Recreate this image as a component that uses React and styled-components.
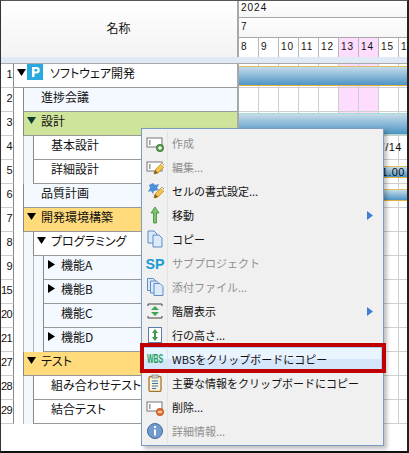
import React from "react";
import styled, { createGlobalStyle, css } from "styled-components";

const Global = createGlobalStyle`
  html, body { margin: 0; padding: 0; background: #fff; }
  body { width: 409px; height: 453px; overflow: hidden; font-family: "Noto Sans CJK JP", "Liberation Sans", sans-serif; color: #111; }
`;

const Frame = styled.div`
  position: relative;
  width: 409px;
  height: 453px;
  box-sizing: border-box;
  background: #fff;
  border-top: 1px solid #555;
  border-left: 1px solid #333;
  border-right: 2px solid #222;
  border-bottom: 2px solid #111;
  overflow: hidden;
  display: grid;
  grid-template-columns: 238px 1fr;
  grid-template-rows: 56px 7px 1fr;
`;

const NameHeader = styled.div`
  background: linear-gradient(#fff, #f3f3f3);
  border-right: 2px solid #a8a8a8;
  display: flex;
  align-items: center;
  justify-content: center;
  font-size: 12px;
  padding: 0 1px 4px 0;
  box-sizing: border-box;
`;

const TimeHeader = styled.div`
  display: grid;
  grid-template-rows: 17px 20px 19px;
  font-size: 10px;
  font-family: "Liberation Sans", sans-serif;
  overflow: hidden;
`;

const HeaderBand = styled.div`
  background: linear-gradient(#fff, #f6f6f6);
  border-bottom: 1px solid #a8a8a8;
  padding: 0 2px;
  letter-spacing: 1px;
  line-height: ${(p) => p.$line}px;
  box-sizing: border-box;
`;

const Days = styled.div`
  display: flex;
`;

const Day = styled.div`
  width: 20px;
  flex: none;
  box-sizing: border-box;
  border-right: 1px solid #b8b8b8;
  padding-left: 2px;
  line-height: 18px;
  letter-spacing: 1px;
  background: ${(p) => (p.$pink ? "#fddcfd" : "#fff")};
`;

const Stripe = styled.div`
  grid-column: 1 / 3;
  background: #e1e9f6;
  border-bottom: 1px solid #aaa;
`;

const Body = styled.div`
  grid-column: 1 / 3;
  display: flex;
  flex-direction: column;
`;

const Row = styled.div`
  display: grid;
  grid-template-columns: 238px 1fr;
  height: 24px;
  flex: none;
`;

const Left = styled.div`
  display: flex;
  height: 24px;
  box-sizing: border-box;
  border-right: 2px solid #a8a8a8;
  overflow: hidden;
`;

const Num = styled.div`
  width: 13px;
  flex: none;
  box-sizing: border-box;
  border-right: 1px solid #888;
  border-bottom: 1px solid #ccc;
  font-size: 11px;
  line-height: 20px;
  text-align: right;
  padding-right: 1px;
  letter-spacing: -0.6px;
  font-family: "Liberation Sans", sans-serif;
`;

const Guide = styled.div`
  width: ${(p) => (p.$first ? 9 : 10)}px;
  flex: none;
  box-sizing: border-box;
  background: ${(p) => (p.$tint ? "#f2f8fe" : "#fff")};
  border-left: ${(p) => (p.$first ? "0" : "1px solid #b5b5b5")};
`;

const rowKinds = {
  plain: css`background: #fff;`,
  tint: css`background: #f3f9ff;`,
  green: css`background: #cee49b;`,
  orange: css`background: #ffdb7c;`,
};

const Cell = styled.div`
  flex: 1;
  min-width: 0;
  display: flex;
  align-items: center;
  box-sizing: border-box;
  border-left: ${(p) => (p.$noLine ? "0" : "1px solid #888")};
  border-bottom: 1px solid #999;
  font-size: 12px;
  font-feature-settings: "palt";
  white-space: nowrap;
  padding-bottom: 7px;
  padding-left: ${(p) => p.$pad}px;
  ${(p) => rowKinds[p.$kind || "plain"]}
`;

const Arrow = styled.svg`
  width: 9px;
  height: 9px;
  flex: none;
  margin-right: ${(p) => p.$gap ?? 5}px;
`;

const Logo = styled.svg`
  width: 16px;
  height: 16px;
  flex: none;
  margin: 0 7px 0 1px;
`;

const Track = styled.div`
  position: relative;
  display: flex;
  height: 24px;
  overflow: hidden;
`;

const Slot = styled.div`
  width: 20px;
  flex: none;
  box-sizing: border-box;
  border-right: 1px solid #cfcfcf;
  border-bottom: 1px solid #cfcfcf;
  background: ${(p) => (p.$pink ? "#fddcfd" : "#fff")};
`;

const Bar = styled.div`
  position: absolute;
  left: 0;
  right: 0;
  top: ${(p) => p.$top}px;
  height: ${(p) => p.$h}px;
  box-sizing: border-box;
  border-top: 1px solid ${(p) => p.$edge || "#e0c060"};
  border-bottom: 1px solid ${(p) => p.$edge || "#e0b040"};
  background: linear-gradient(#c5dcea, #4e94c4);
`;

const TrackLabel = styled.div`
  position: absolute;
  right: ${(p) => p.$right}px;
  top: ${(p) => p.$top}px;
  font-size: 11px;
  line-height: 14px;
  letter-spacing: 0.5px;
  font-family: "Liberation Sans", sans-serif;
  white-space: nowrap;
`;

const Foot = styled.div`
  flex: 1;
`;

const Menu = styled.div`
  position: absolute;
  left: 140px;
  top: 127px;
  width: 243px;
  height: 318px;
  box-sizing: border-box;
  background: #f0f0f0;
  border: 1px solid #7c9cc4;
  padding: 2px 1px;
  box-shadow: 3px 3px 4px rgba(0, 0, 0, 0.25);
  display: flex;
  flex-direction: column;
`;

const Item = styled.div`
  display: flex;
  align-items: center;
  height: 24px;
  flex: none;
  font-size: 11px;
  white-space: nowrap;
  box-sizing: border-box;
  color: ${(p) => (p.$off ? "#8f8f8f" : "#111")};
  ${(p) =>
    p.$hot &&
    css`
      background: linear-gradient(#eaf4ff 0 50%, #d5e6fb 50% 100%);
      box-shadow: inset 0 0 0 1px #aeccf0;
    `}
`;

const IconBox = styled.div`
  width: 25px;
  height: 100%;
  flex: none;
  box-sizing: border-box;
  border-right: 1px solid #e2e3e3;
  display: flex;
  align-items: center;
  justify-content: center;
  margin-right: 4px;
`;

const Label = styled.span`
  flex: 1;
  padding-bottom: 1px;
`;

const SubArrow = styled.svg`
  width: 6px;
  height: 9px;
  flex: none;
  margin-right: 9px;
`;

const Highlight = styled.div`
  position: absolute;
  left: 139px;
  top: 342px;
  width: 246px;
  height: 30px;
  box-sizing: border-box;
  border: 4px solid #c00000;
  pointer-events: none;
`;

const Ico = styled.svg`
  width: 18px;
  height: 18px;
  display: block;
`;

const Mark = styled.span`
  font: bold ${(p) => p.$size}px "Liberation Sans", sans-serif;
  color: ${(p) => p.$c};
  transform: scaleX(${(p) => p.$x});
  flex: none;
`;

const TriDown = ({ fill = "#000", gap }) => (
  <Arrow viewBox="0 0 9 9" $gap={gap}><path d="M0 1h9L4.500 8z" fill={fill} /></Arrow>
);
const TriRight = () => (
  <Arrow viewBox="0 0 9 9"><path d="M1 0v9l7-4.500z" fill="#000" /></Arrow>
);

const Pencil = () => (
  <g>
    <path d="M8 16l1-4 7-7 3 3-7 7z" fill="#f3c247" stroke="#b98a26" strokeWidth=".7" />
    <path d="M8 16l1-4 3 3z" fill="#7a5a28" />
    <path d="M14.500 6.500l3 3 1.300-1.500-3-3z" fill="#e8e8e8" stroke="#b98a26" strokeWidth=".5" />
  </g>
);

const Slip = () => (
  <g>
    <rect x="1" y="4" width="15" height="9" fill="#fff" stroke="#777" />
    <rect x="3" y="6" width="1.500" height="5" fill="#999" />
  </g>
);

const Doc = ({ x, y }) => (
  <path d={`M${x} ${y}h6l3 3v9h-9z`} fill="#dce9f8" stroke="#5d8cc6" />
);

const icons = {
  add: (
    <Ico viewBox="0 0 18 18">
      <Slip />
      <circle cx="14" cy="14" r="3.700" fill="#4b9a3f" stroke="#2f6e29" strokeWidth=".6" />
      <path d="M14 12v4M12 14h4" stroke="#fff" strokeWidth="1.300" />
    </Ico>
  ),
  edit: (
    <Ico viewBox="0 0 18 18">
      <Slip />
      <Pencil />
    </Ico>
  ),
  format: (
    <Ico viewBox="0 0 18 18">
      <path d="M3 3l4-2 2 2 4-1-2 4 2 2-5 1-1 3-2-3-3 1 2-4z" fill="#4d8fd8" />
      <Pencil />
    </Ico>
  ),
  up: (
    <Ico viewBox="0 0 18 18">
      <path d="M9 1l4 6h-2.500v10h-3V7H5z" fill="#7fc46c" stroke="#3f8a3a" strokeWidth=".8" />
    </Ico>
  ),
  copy: (
    <Ico viewBox="0 0 18 18">
      <Doc x={2} y={1} />
      <Doc x={7} y={5} />
    </Ico>
  ),
  sp: <Mark $size={15} $c="#1b9ad6" $x={0.95}>SP</Mark>,
  attach: (
    <Ico viewBox="0 0 18 18">
      <Doc x={1.500} y={0.500} />
      <Doc x={4.500} y={3} />
      <Doc x={8} y={5.500} />
    </Ico>
  ),
  level: (
    <Ico viewBox="0 0 18 18">
      <path d="M2 4V2h14v2M2 14v2h14v-2" fill="none" stroke="#444" />
      <path d="M9 4l4 4H5z" fill="#3aa655" />
      <path d="M9 14l4-4H5z" fill="#3aa655" />
    </Ico>
  ),
  height: (
    <Ico viewBox="0 0 18 18">
      <rect x="2.500" y="1.500" width="13" height="15" fill="#fff" stroke="#5a7fa8" />
      <path d="M9 3l3 4h-2v4h2l-3 4-3-4h2V7H6z" fill="#3e9a4b" />
    </Ico>
  ),
  wbs: <Mark $size={12} $c="#1ca05a" $x={0.58}>WBS</Mark>,
  clip: (
    <Ico viewBox="0 0 18 18">
      <rect x="3" y="2.500" width="12" height="15" rx="1.500" fill="#fbf3d9" stroke="#a8742c" strokeWidth="1.300" />
      <rect x="6" y="1" width="6" height="3" fill="#c9c9c9" stroke="#777" strokeWidth=".6" />
      <path d="M6 7h6M6 9.500h6M6 12h6M6 14.500h4" stroke="#3a6fb5" />
    </Ico>
  ),
  remove: (
    <Ico viewBox="0 0 18 18">
      <Slip />
      <circle cx="14" cy="14" r="3.700" fill="#e5702a" stroke="#a8481a" strokeWidth=".6" />
      <path d="M12 14h4" stroke="#fff" strokeWidth="1.300" />
    </Ico>
  ),
  info: (
    <Ico viewBox="0 0 18 18">
      <circle cx="9" cy="9" r="7.500" fill="#6f9bd0" stroke="#44699c" />
      <rect x="8" y="4" width="2" height="2" fill="#fff" />
      <rect x="8" y="7.500" width="2" height="6" fill="#fff" />
    </Ico>
  ),
};

const rows = [
  { n: 1, text: "ソフトウェア開発", lead: "logo", guides: 1, bar: [2, 20] },
  { n: 2, text: "進捗会議", kind: "tint", guides: 1 },
  { n: 3, text: "設計", kind: "green", guides: 1, arrow: "g", bar: [1, 22], edge: "#a6dcd0" },
  { n: 4, text: "基本設計", guides: 2, label: ["7/14", 5, 4] },
  { n: 5, text: "詳細設計", guides: 2, bar: [6, 12], label: ["11.00", 2, 5] },
  { n: 6, text: "品質計画", kind: "tint", guides: 1, bar: [5, 12] },
  { n: 7, text: "開発環境構築", kind: "orange", guides: 1, arrow: "d" },
  { n: 8, text: "プログラミング", guides: 2, arrow: "d" },
  { n: 9, text: "機能A", kind: "tint", guides: 3, arrow: "r" },
  { n: 15, text: "機能B", kind: "tint", guides: 3, arrow: "r" },
  { n: 20, text: "機能C", kind: "tint", guides: 3 },
  { n: 21, text: "機能D", kind: "tint", guides: 3, arrow: "r" },
  { n: 27, text: "テスト", kind: "orange", guides: 1, arrow: "d" },
  { n: 28, text: "組み合わせテスト", guides: 2 },
  { n: 29, text: "結合テスト", guides: 2 },
];

const menu = [
  { icon: "add", text: "作成", off: true },
  { icon: "edit", text: "編集...", off: true },
  { icon: "format", text: "セルの書式設定..." },
  { icon: "up", text: "移動", sub: true },
  { icon: "copy", text: "コピー" },
  { icon: "sp", text: "サブプロジェクト", off: true },
  { icon: "attach", text: "添付ファイル...", off: true },
  { icon: "level", text: "階層表示", sub: true },
  { icon: "height", text: "行の高さ..." },
  { icon: "wbs", text: "WBSをクリップボードにコピー", hot: true },
  { icon: "clip", text: "主要な情報をクリップボードにコピー" },
  { icon: "remove", text: "削除..." },
  { icon: "info", text: "詳細情報...", off: true },
];

const days = [8, 9, 10, 11, 12, 13, 14, 15, 16];
const isPink = (d) => d === 13 || d === 14;

export default function App() {
  return (
    <Frame>
      <Global />
      <NameHeader>名称</NameHeader>
      <TimeHeader>
        <HeaderBand $line={14}>2024</HeaderBand>
        <HeaderBand $line={18}>7</HeaderBand>
        <Days>
          {days.map((d) => (
            <Day key={d} $pink={isPink(d)}>{d}</Day>
          ))}
        </Days>
      </TimeHeader>
      <Stripe />
      <Body>
        {rows.map((r) => (
          <Row key={r.n}>
            <Left>
              <Num>{r.n}</Num>
              {r.lead ? (
                <Cell $noLine $pad={3}>
                  <TriDown gap={0} />
                  <Logo viewBox="0 0 16 16">
                    <rect width="16" height="16" fill="#29a9e0" />
                    <path d="M5 3h4.500a3 3 0 0 1 0 6.500H7.500V13H5zM7.500 5v2.500h1.800a1.200 1.200 0 0 0 0-2.500z" fill="#fff" />
                  </Logo>
                  {r.text}
                </Cell>
              ) : (
                <>
                  {Array.from({ length: r.guides }, (_, i) => (
                    <Guide key={i} $first={i === 0} $tint={i > 0} />
                  ))}
                  <Cell $kind={r.kind} $pad={r.arrow ? 3 : 17}>
                    {r.arrow === "d" && <TriDown />}
                    {r.arrow === "g" && <TriDown fill="#0d3b30" />}
                    {r.arrow === "r" && <TriRight />}
                    {r.text}
                  </Cell>
                </>
              )}
            </Left>
            <Track>
              {days.map((d) => (
                <Slot key={d} $pink={isPink(d) && r.n <= 3} />
              ))}
              {r.bar && <Bar $top={r.bar[0]} $h={r.bar[1]} $edge={r.edge} />}
              {r.label && <TrackLabel $right={r.label[1]} $top={r.label[2]}>{r.label[0]}</TrackLabel>}
            </Track>
          </Row>
        ))}
        <Foot />
      </Body>
      <Menu>
        {menu.map((m) => (
          <Item key={m.text} $off={m.off} $hot={m.hot}>
            <IconBox>{icons[m.icon]}</IconBox>
            <Label>{m.text}</Label>
            {m.sub && (
              <SubArrow viewBox="0 0 6 9"><path d="M0 0l6 4.500L0 9z" fill="#3d7fd4" /></SubArrow>
            )}
          </Item>
        ))}
      </Menu>
      <Highlight />
    </Frame>
  );
}
